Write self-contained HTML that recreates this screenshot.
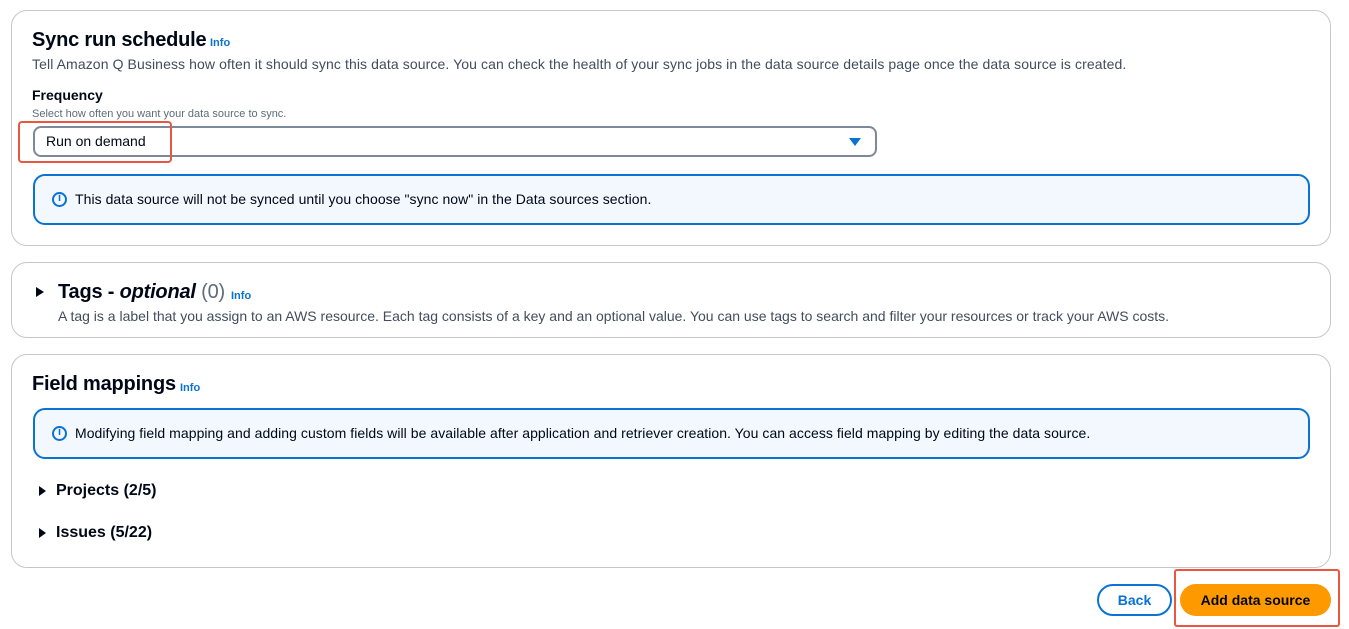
<!DOCTYPE html>
<html><head><style>
*{box-sizing:border-box;margin:0;padding:0}
body{width:1349px;height:629px;background:#fff;font-family:"Liberation Sans",sans-serif;color:#000716;position:relative;overflow:hidden}
.card{position:absolute;left:11px;width:1320px;border:1px solid #c6c6cd;border-radius:16px;background:#fff}
.abs{position:absolute;white-space:nowrap}
.h2{font-size:20px;font-weight:bold;letter-spacing:-0.2px}
.info{font-size:11px;font-weight:bold;color:#0972d3}
.desc{font-size:14px;color:#414d5c}
.alert{position:absolute;left:21px;width:1277px;height:51px;border:2px solid #0972d3;border-radius:12px;background:#f2f8fd}
.alert span{position:absolute;left:40px;top:15px;font-size:14px;color:#000716;white-space:nowrap;letter-spacing:0.05px}
.ic{position:absolute;left:17px;top:16px;width:15px;height:15px;border:2px solid #0972d3;border-radius:50%}
.ic:after{content:"i";position:absolute;left:4px;top:-2px;font-size:11px;font-weight:bold;color:#0972d3}
.tri{width:0;height:0;border-top:5px solid transparent;border-bottom:5px solid transparent;border-left:8px solid #000716;position:absolute}
</style></head><body>
<div class="card" style="top:10px;height:236px">
<div class="abs h2" style="left:20px;top:18px">Sync run schedule</div>
<div class="abs info" style="left:198px;top:26px">Info</div>
<div class="abs desc" style="left:20px;top:45px;letter-spacing:0.1px">Tell Amazon Q Business how often it should sync this data source. You can check the health of your sync jobs in the data source details page once the data source is created.</div>
<div class="abs" style="left:20px;top:76px;font-size:14px;font-weight:bold">Frequency</div>
<div class="abs" style="left:20px;top:97px;font-size:11px;color:#5f6b7a">Select how often you want your data source to sync.</div>
<div class="abs" style="left:21px;top:115px;width:844px;height:31px;border:2px solid #7d8998;border-radius:8px"></div>
<div class="abs" style="left:34px;top:122px;font-size:14px">Run on demand</div>
<div class="abs" style="left:837px;top:127px;width:0;height:0;border-left:6px solid transparent;border-right:6px solid transparent;border-top:8px solid #0972d3"></div>
<div class="abs" style="left:6px;top:110px;width:154px;height:42px;border:2px solid #e8573f;border-radius:4px"></div>
<div class="alert" style="top:163px"><div class="ic"></div><span>This data source will not be synced until you choose "sync now" in the Data sources section.</span></div>
</div>
<div class="card" style="top:262px;height:76px">
<div class="tri" style="left:24px;top:24px"></div>
<div class="abs h2" style="left:46px;top:18px">Tags - <i>optional</i> <span style="font-weight:normal;color:#5f6b7a">(0)</span></div>
<div class="abs info" style="left:219px;top:27px">Info</div>
<div class="abs desc" style="left:46px;top:45px">A tag is a label that you assign to an AWS resource. Each tag consists of a key and an optional value. You can use tags to search and filter your resources or track your AWS costs.</div>
</div>
<div class="card" style="top:354px;height:214px">
<div class="abs h2" style="left:20px;top:18px">Field mappings</div>
<div class="abs info" style="left:168px;top:27px">Info</div>
<div class="alert" style="top:53px"><div class="ic"></div><span>Modifying field mapping and adding custom fields will be available after application and retriever creation. You can access field mapping by editing the data source.</span></div>
<div class="tri" style="left:27px;top:131px;border-left-width:7px"></div>
<div class="abs" style="left:44px;top:127px;font-size:16px;font-weight:bold">Projects (2/5)</div>
<div class="tri" style="left:27px;top:173px;border-left-width:7px"></div>
<div class="abs" style="left:44px;top:169px;font-size:16px;font-weight:bold">Issues (5/22)</div>
</div>
<div class="abs" style="left:1097px;top:584px;width:75px;height:32px;border:2px solid #0972d3;border-radius:16px;color:#0972d3;font-size:14px;font-weight:bold;text-align:center;line-height:28px">Back</div>
<div class="abs" style="left:1180px;top:584px;width:151px;height:32px;background:#ff9900;border-radius:16px;font-size:14px;font-weight:bold;text-align:center;line-height:32px">Add data source</div>
<div class="abs" style="left:1174px;top:569px;width:166px;height:58px;border:2px solid #e8573f;border-radius:3px"></div>
</body></html>
